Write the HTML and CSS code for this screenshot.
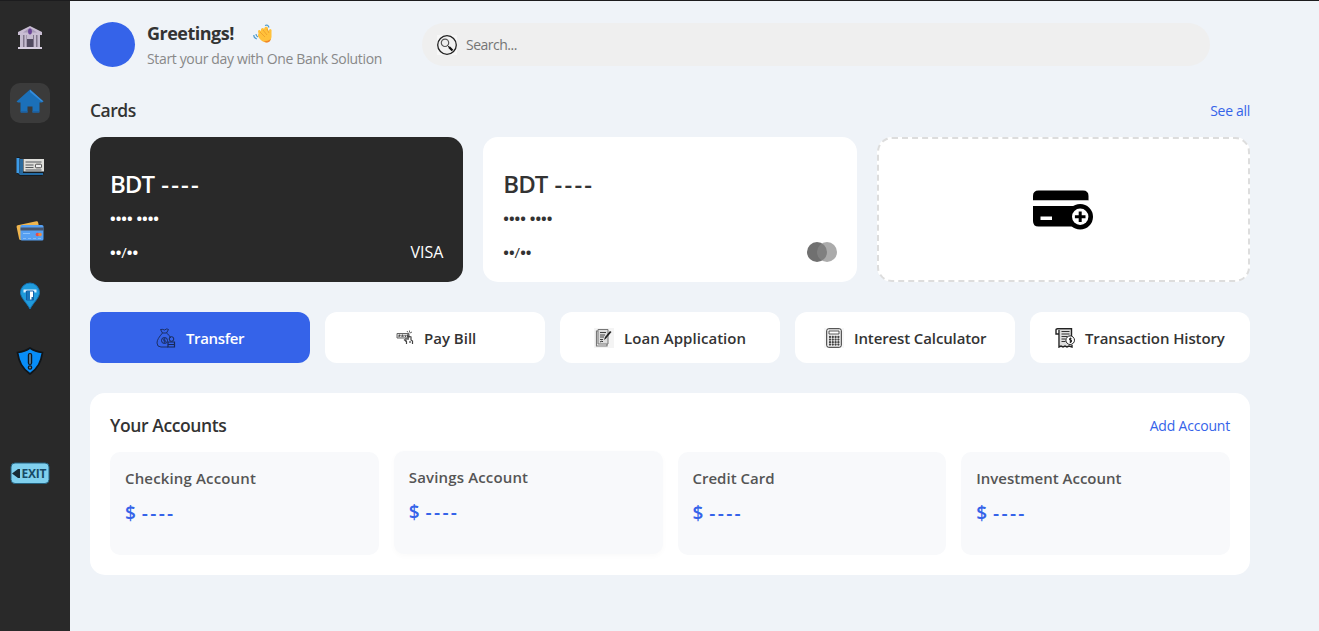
FILE: index.html
```html
<!DOCTYPE html>
<html lang="en">
<head>
<meta charset="utf-8">
<title>One Bank Solution</title>
<link rel="stylesheet" href="styles.css">
</head>
<body>
<nav class="sidebar">
  <a class="nav-item bank"><svg width="28" height="28" viewBox="0 0 28 28"><path d="M14 2 26 8v3H2V8z" fill="#c9bdd3"/><path d="M14 3.500 21 8.500H7z" fill="#a99cb9"/><ellipse cx="14" cy="7.500" rx="1.900" ry="3" fill="#6a4596"/><path d="M4 11h20v12H4z" fill="#81768c"/><path d="M4 11h3v12H4zM8.500 11h2v12h-2zM18 11h2v12h-2zM21.500 11h2.500v12h-2.500zM11 11h6v4h-6z" fill="#c5bbcf"/><path d="M11 15h6v8h-6z" fill="#524b60"/><path d="M2 23h24v2H2z" fill="#d8cfe0"/></svg></a>
  <a class="nav-item active"><svg width="28" height="28" viewBox="0 0 28 28"><path d="M14 .5 27.500 12.500 26 13.500H23.500V23q0 .5-.5.500h-6.500v-6h-5v6H5q-.5 0-.5-.5v-9.500H2L.5 12.500z" fill="#1b70b9"/><path d="M14 .5 27.500 12.500h-2L14 3z" fill="#348cdd"/><path d="M5 22h6.500v1.500H5zM16.500 22H23v1.500h-6.500z" fill="#1d61a2"/></svg></a>
  <a class="nav-item"><svg width="30" height="22" viewBox="0 0 30 22"><path d="M2 1h3v2h24v14l-2 3H5l-3-3z" fill="#151c22"/><path d="M1.500 2h3v15h-3z" fill="#3c9be8"/><path d="M5 3h3v14H5z" fill="#2a6a9d"/><path d="M3 17h25v2H5z" fill="#246ca6"/><path d="M8.500 3H29v12.500H8.500z" fill="#dededa"/><path d="M10.500 6h16M10.500 9h8M10.500 11.500h8M10.500 14h16" stroke="#55595c" stroke-width="1.200"/><rect x="20.500" y="8.200" width="6" height="3.600" rx="1" fill="#eee" stroke="#444"/></svg></a>
  <a class="nav-item"><svg width="28" height="28" viewBox="0 0 28 28"><g transform="rotate(-12 13 12)"><rect x="1.500" y="5" width="22" height="15" rx="1.500" fill="#efb54e"/></g><rect x="4.500" y="7" width="23" height="15.500" rx="1.500" fill="#559ff2"/><path d="M4.500 9.500h23v3h-23z" fill="#46556d"/><path d="M7 15.500h7" stroke="#8bc2fc"/><path d="M7 20.500h18" stroke="#82bbf8" stroke-dasharray="3 2"/><circle cx="21.500" cy="16.500" r="1.800" fill="#e84b4c"/><circle cx="24" cy="16.500" r="1.800" fill="#f18b3c"/></svg></a>
  <a class="nav-item"><svg width="28" height="28" viewBox="0 0 28 28"><path d="M14 27C11 21 4.500 16 4.500 10.500a9.500 9.500 0 0 1 19 0C23.500 16 17 21 14 27z" fill="#209bdc" stroke="#1473b4"/><path d="M8.500 10.500V8.500h11v2" fill="none" stroke="#d9efff" stroke-width="2"/><path d="M10.500 9h7v9h-7z" fill="#fff" stroke="#125fa9"/><path d="M11 9h3v9h-3z" fill="#1976bc"/><path d="M15.500 15h2v3h-2z" fill="#1267a5"/></svg></a>
  <a class="nav-item"><svg width="28" height="28" viewBox="0 0 28 28"><path d="M14 1C10 4 6 5 1.500 5.500 3 15 6 21 14 27 22 21 25 15 26.500 5.500 22 5 18 4 14 1z" fill="#078df8" stroke="#101519" stroke-width="1.700"/><rect x="12.400" y="6.500" width="3.200" height="11" rx="1.500" fill="#56758a" stroke="#101820" stroke-width="1.200"/><circle cx="14" cy="20.500" r="1.700" fill="#6d7f8a" stroke="#101820" stroke-width="1.200"/></svg></a>
  <a class="nav-item exit"><svg width="40" height="24" viewBox="0 0 40 24"><rect x="1" y="2" width="38" height="20.500" rx="4" fill="#80d0ee" stroke="#246381"/><path d="M2 12.500 8 8h2v9H8z" fill="#192c36"/><text x="11.500" y="16.800" textLength="25" class="exit-text">EXIT</text></svg></a>
</nav>
<main class="main">
  <header class="topbar">
    <div class="avatar"></div>
    <div class="greeting">
      <div class="hello"><span class="hello-text">Greetings!</span><svg width="20" height="20" viewBox="0 0 20 20"><path d="M5.500 10 5 7Q6 5 8 7L8 5Q10 3 11 5L12 3Q14 2 15 4V7L17 5Q19 5 18.500 7.500V13Q18 18 13 18.500 9 18 6.500 14.500 4 11.500 5.500 10z" fill="#ffc13b"/><path d="m7 8 5 5M10 6l4 5M14 5l2 4" stroke="#e99525" stroke-width=".7"/><path d="M8 16q4 3 10-1-2 5-6 3z" fill="#ef852e"/><path d="M.8 11q0 3 3 4M3 10q0 2 2 3M12 1.500q3-1.500 4 2" fill="none" stroke="#4f9bcc" stroke-width="1.200"/></svg></div>
      <div class="tagline">Start your day with One Bank Solution</div>
    </div>
    <div class="search"><svg width="20" height="20" viewBox="0 0 20 20"><path d="M0 0h20v20H0z" fill="#f7f7f7"/><circle cx="10" cy="10" r="9.300" fill="#f1f1f1" stroke="#222" stroke-width="1.300"/><circle cx="8" cy="7.800" r="3.700" fill="#eee" stroke="#555" stroke-width="1.200"/><path d="m10.500 10.500 1.500 1.500" stroke="#333"/><path d="m12 12 3.500 3.500" stroke="#111" stroke-width="2.300"/></svg><span class="search-text">Search...</span></div>
  </header>
  <div class="section-head"><h2 class="cards-title">Cards</h2><a class="link see-all">See all</a></div>
  <section class="cards">
    <article class="bank-card dark"><div class="balance">BDT <span class="dashes">----</span></div><div class="number">•••• ••••</div><div class="card-foot"><span class="expiry">••<i>/</i>••</span><span class="visa">VISA</span></div></article>
    <article class="bank-card"><div class="balance">BDT <span class="dashes">----</span></div><div class="number">•••• ••••</div><div class="card-foot"><span class="expiry">••<i>/</i>••</span><svg class="network" width="30" height="20" viewBox="0 0 30 20"><circle cx="10" cy="10" r="10" fill="#707070"/><circle cx="20" cy="10" r="10" fill="#888" fill-opacity=".7"/></svg></div></article>
    <article class="bank-card add"><svg width="60" height="40" viewBox="0 0 60 40"><path d="M0 10V6Q0 .5 5.500 .5H50Q55.500 .5 55.500 6V10.500H0zM0 16H55v20.500H5.500Q0 36.500 0 31z"/><path d="M0 10.500h55.500v5H0zM50 15.500h10v5H50zM55 35h5v5h-5z" fill="#fff"/><path d="M7.500 26.500h11.500v3.500H7.500z" fill="#fff"/><circle cx="47.200" cy="26.800" r="12.800"/><circle cx="47.200" cy="26.800" r="8.200" fill="#fff"/><path d="M47.200 21.500v10.600M41.900 26.800h10.600" stroke="#000" stroke-width="3"/></svg></article>
  </section>
  <section class="actions">
    <button class="action primary"><svg width="20" height="20" viewBox="0 0 20 20"><path d="M6.500 5 4.500 1.500Q7 1 8.500 2 11 0 12.500 1.500L10.500 5zM6.500 5C3 9 1 12 1 15Q1 19 5 19h7M10.500 5q4 3 4 5" fill="none" stroke="#182957" stroke-width=".9"/><circle cx="8.500" cy="12.500" r="3" fill="none" stroke="#182957"/><path d="M9.500 11h-2v1.500h2V14h-2M8.500 10v5" fill="none" stroke="#182957" stroke-width=".6"/><circle cx="15.500" cy="11" r="2.300" fill="none" stroke="#182957"/><path d="M12 14h6.500v5H12zM12 16.500h7" fill="none" stroke="#182957" stroke-width="1.200"/></svg><span class="t-transfer">Transfer</span></button>
    <button class="action"><svg width="20" height="20" viewBox="0 0 20 20"><path d="M3 5.500h12v4.500H3z" fill="#ddd" stroke="#666"/><path d="M5 7v2M5 7h1v1H5M8 9V7h1v2M10.500 7l1 1v1M12.500 7l-1 1M13.500 7v2" fill="none" stroke="#333" stroke-width=".8"/><path d="M13 3l1 1.500M15.500 2.500v2M18 4l-2 1" stroke="#666"/><path d="M14 6v6M14 8l3 1v3l1.500 1v3M10 11.500l2.500 2V16M12 10v4M16 13v2" fill="none" stroke="#444" stroke-width="1.200"/></svg><span class="t-pay">Pay Bill</span></button>
    <button class="action"><svg width="20" height="20" viewBox="0 0 20 20"><path d="M0 0h20v20H0z" fill="#f4f4f4"/><path d="M4 3H2.500v15H13v-2" fill="none" stroke="#777" stroke-width="1.200"/><path d="M4 1.500h10V16H4z" fill="#ddd" stroke="#777"/><path d="M6 4.500h6M6 7h5M6 9h4M6 11.500h3" stroke="#444"/><path d="m10 12 1-3 5-6 1.500 1L12 10.500z" fill="#222"/><path d="m6 14 2-1 1 1" fill="none" stroke="#333"/></svg><span class="t-loan">Loan Application</span></button>
    <button class="action"><svg width="20" height="20" viewBox="0 0 20 20"><path d="M0 0h20v20H0z" fill="#f7f7f7"/><rect x="2.700" y=".7" width="14.600" height="18.600" rx="2" fill="#eee" stroke="#333"/><path d="M5 3h10v3H5z" fill="#fff" stroke="#333" stroke-width=".8"/><g fill="none" stroke="#444" stroke-width="2.300" stroke-linecap="round" stroke-dasharray="0 2.800"><path d="M6 9h9M6 11.600h9M6 14.200h9M6 16.600h9"/></g></svg><span class="t-interest">Interest Calculator</span></button>
    <button class="action"><svg width="20" height="20" viewBox="0 0 20 20"><path d="M5 2h11.500v16H5z" fill="#ddd"/><path d="M4 6H1V2Q1 .8 2.500 .8h14V8M4 2v17l2-1 2 1 2-1 2 1 2-1 3 1v-2" fill="none" stroke="#222" stroke-width="1.400"/><path d="M6.500 3.500h8M6.500 6h8M6.500 8.500h6M6.500 11h4M6.500 13.500h4" stroke="#333" stroke-width="1.200"/><circle cx="15.200" cy="12.200" r="4.300" fill="#fff" stroke="#222"/><path d="M16.500 10.500h-2V12h2v2h-2M15.500 9.500v5.500" fill="none" stroke="#222" stroke-width=".9"/></svg><span class="t-history">Transaction History</span></button>
  </section>
  <section class="accounts">
    <div class="accounts-head"><h2 class="accounts-title">Your Accounts</h2><a class="link add-account">Add Account</a></div>
    <div class="account-grid">
      <article class="account"><h3 class="a-checking">Checking Account</h3><p>$ <span class="dashes">----</span></p></article>
      <article class="account raised"><h3 class="a-savings">Savings Account</h3><p>$ <span class="dashes">----</span></p></article>
      <article class="account"><h3 class="a-credit">Credit Card</h3><p>$ <span class="dashes">----</span></p></article>
      <article class="account"><h3 class="a-investment">Investment Account</h3><p>$ <span class="dashes">----</span></p></article>
    </div>
  </section>
</main>
</body>
</html>
```
FILE: styles.css
```css
* { box-sizing: border-box; margin: 0; padding: 0; }
body { display: flex; height: 631px; overflow: hidden; border-top: 1px solid #1c1c1e; background: #eff3f8; color: #333; font-family: "Open Sans", "Noto Sans", sans-serif; white-space: nowrap; }
svg { display: block; flex: none; }
i { font-style: normal; font-weight: 400; }
.sidebar { width: 70px; flex: none; padding: 17px 0 0 10px; background: #292929; display: flex; flex-direction: column; gap: 24.500px; }
.nav-item { width: 40px; height: 40px; flex: none; display: flex; align-items: center; justify-content: center; border-radius: 10px; }
.active { background: #3b3b3b; }
.exit { margin-top: 48px; }
.exit-text { font: bold 12px "Open Sans", sans-serif; fill: #174965; }
.main { width: 1200px; padding: 21px 20px 0; }
.topbar { display: flex; height: 45px; width: 1120px; }
.avatar { width: 45px; height: 45px; border-radius: 50%; background: #3563e9; }
.greeting { width: 275px; margin-left: 12px; }
.hello { display: flex; align-items: center; height: 23px; }
.hello-text { width: 106px; font-size: 18px; line-height: 23px; font-weight: 700; letter-spacing: -.5px; }
.tagline { font-size: 14px; line-height: 19px; margin-top: 4px; color: #888; letter-spacing: -.35px; }
.search { display: flex; align-items: center; gap: 9px; flex: 1; height: 43px; margin-top: 1px; padding-left: 15px; border-radius: 22px; background: #efefef; color: #757575; font-size: 14px; letter-spacing: -.5px; }
.section-head { display: flex; justify-content: space-between; align-items: center; height: 24px; margin: 32px 0 14px; }
h2 { font-size: 18px; line-height: 24px; font-weight: 600; }
.cards-title { font-size: 17.500px; letter-spacing: -.5px; margin-top: -2px; }
.accounts-title { font-size: 17.500px; letter-spacing: -.4px; }
.link { color: #3563e9; font-size: 14px; line-height: 20px; letter-spacing: -.3px; }
.add-account { letter-spacing: -.2px; padding-top: 2px; }
.cards { display: grid; grid-template-columns: repeat(3, 1fr); gap: 20px; }
.bank-card { height: 145px; border-radius: 15px; padding: 31px 20px 0; background: #fff; }
.dark { background: #292929; color: #fff; }
.add { border: 2px dashed #ddd; padding: 0; display: flex; align-items: center; justify-content: center; }
.balance { font-size: 24px; line-height: 32px; font-weight: 550; letter-spacing: -1px; }
.balance .dashes { margin-left: 2px; letter-spacing: 2.200px; }
.number { font-size: 15px; line-height: 20px; margin-top: 8px; font-weight: 700; }
.card-foot { display: flex; justify-content: space-between; align-items: center; height: 20px; margin-top: 14px; font-size: 15px; }
.expiry { font-weight: 700; }
.visa { font-size: 16px; }
.actions { display: grid; grid-template-columns: repeat(5, 1fr); gap: 15px; margin-top: 30px; }
.action { height: 51px; border: 0; border-radius: 12px; background: #fff; display: flex; align-items: center; justify-content: center; gap: 10px; font: 600 15px/20px "Open Sans", sans-serif; color: #333; }
.primary { background: #3563e9; color: #fff; }
.action span { text-align: left; }
.t-transfer { width: 58px; letter-spacing: -.35px; }
.t-pay { width: 52px; }
.t-loan { width: 122px; letter-spacing: .05px; }
.t-interest { width: 132px; letter-spacing: -.12px; }
.t-history { width: 140px; letter-spacing: -.1px; }
.accounts { height: 182px; margin-top: 30px; border-radius: 15px; padding: 20px; background: #fff; }
.accounts-head { display: flex; justify-content: space-between; align-items: center; height: 24px; margin-bottom: 15px; }
.account-grid { display: grid; grid-template-columns: repeat(4, 1fr); gap: 15px; }
.account { height: 103px; border-radius: 10px; background: #f8f9fb; padding: 16px 15px 0; }
.raised { transform: translateY(-1px); box-shadow: 0 2px 6px rgba(0,0,0,.025); }
h3 { font-size: 15px; line-height: 21px; font-weight: 600; color: #555; }
.a-checking, .a-savings { letter-spacing: .15px; }
.account p { margin-top: 11px; font-size: 19px; line-height: 27px; font-weight: 550; color: #3563e9; }
.account .dashes { margin-left: 1px; letter-spacing: 2.300px; }
```
